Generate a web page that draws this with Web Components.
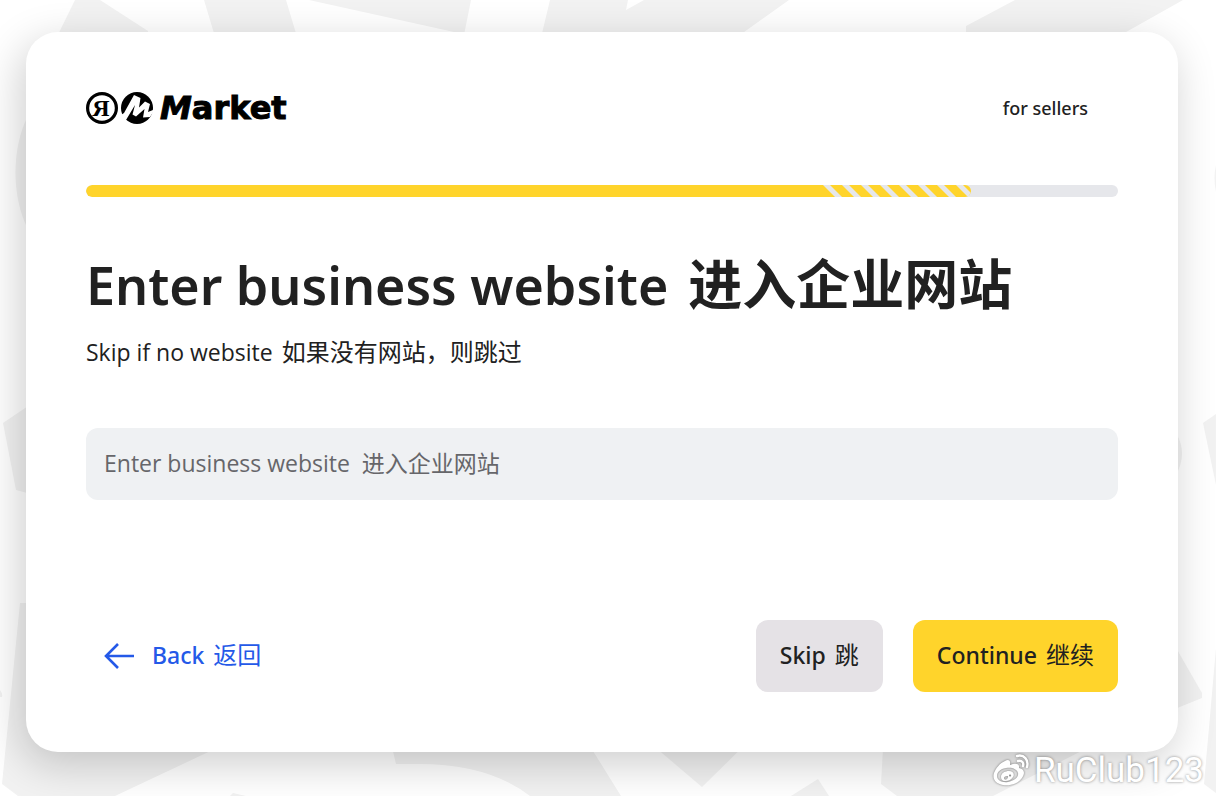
<!DOCTYPE html>
<html lang="en">
<head>
<meta charset="utf-8">
<meta name="viewport" content="width=device-width, initial-scale=1">
<title>Market for sellers</title>
<style>
  body { margin: 0; background: #fff; color: #212121; font-family: "Open Sans", "Noto Sans CJK SC", sans-serif; }
</style>
</head>
<body>
<seller-page>
  <seller-card>
    <market-logo slot="logo">Market</market-logo>
    <span slot="audience">for sellers</span>
    <step-progress slot="progress" value="85.8"></step-progress>
    <bilingual-text slot="title" role="heading" aria-level="1" size="title">Enter business website<span slot="zh" lang="zh">进入企业网站</span></bilingual-text>
    <bilingual-text slot="hint">Skip if no website<span slot="zh" lang="zh">如果没有网站，则跳过</span></bilingual-text>
    <website-field slot="field"></website-field>
    <back-link slot="back"><bilingual-text size="action">Back<span slot="zh" lang="zh">返回</span></bilingual-text></back-link>
    <action-button slot="actions"><bilingual-text size="action">Skip<span slot="zh" lang="zh">跳</span></bilingual-text></action-button>
    <action-button slot="actions" kind="primary"><bilingual-text size="action">Continue<span slot="zh" lang="zh">继续</span></bilingual-text></action-button>
  </seller-card>
  <author-mark slot="mark">RuClub123</author-mark>
</seller-page>

<script>
const define = (name, html, setup) => {
  const template = document.createElement('template');
  template.innerHTML = html;
  customElements.define(name, class extends HTMLElement {
    constructor() {
      super();
      this.attachShadow({ mode: 'open' }).append(template.content.cloneNode(true));
    }
    connectedCallback() { if (setup) setup(this, this.shadowRoot); }
  });
};

define('seller-page', `
<style>
  :host { display: block; position: relative; min-height: 100vh; box-sizing: border-box; padding: 32px 38px 44px 26px; overflow: hidden; isolation: isolate; }
  .shapes { position: absolute; inset: 0; width: 100%; height: 100%; z-index: -1; fill: #f2f2f2; }
</style>
<svg class="shapes" viewBox="0 0 1216 796" preserveAspectRatio="none" aria-hidden="true">
  <path d="M75 0h25l48 31v20H50z"/>
  <path d="M204 0h82l18 60h-82z"/>
  <path d="M309 0h162l-10 50-7-18z"/>
  <path d="M550 0h78l-2 10 18-10h145l-70 50H538z"/>
  <path d="M1015 0h168l-80 45H966V26z"/>
  <path d="M50 90C4 120 4 225 50 255z"/>
  <path d="M40 398 3 423l13 67 30 8z"/>
  <path d="M20 603h30v120h220l-155 73H18L2 784z"/>
  <path d="M0 690q3 4 2 7H0z"/>
  <path d="M386 722l10 42h24q68 0 110 32h91l-46-74z"/>
  <path d="M230 796l3-3 13 3z"/>
  <path d="M635 730h125l-58 57z"/>
  <path d="M791 796l27-17 11 17z"/>
  <path d="M884 730l-3 54 16 12h96l130-66z"/>
  <path d="M1160 415q44 37 0 80z"/>
  <path d="M1160 620l42 73v5l-42 17z"/>
  <path d="M1216 414l-13 9 13 62z"/>
  <path d="M1216 648l-12 136 12 9z"/>
  <path d="M1216 165q-3 13 0 27z"/>
</svg>
<slot></slot>
<slot name="mark"></slot>`);

define('seller-card', `
<style>
  :host { display: flex; flex-direction: column; box-sizing: border-box; min-height: calc(100vh - 76px); padding: 60px; border-radius: 32px; background: #fff; box-shadow: -5px 12px 44px rgba(0, 0, 0, .2); }
  header { display: flex; align-items: center; justify-content: space-between; height: 32px; padding-right: 30px; margin-bottom: 61px; }
  .audience { font: 500 18px/32px "Noto Sans", sans-serif; }
  main { display: flex; flex-direction: column; }
  .title { margin-top: 49px; }
  .hint { margin-top: 14px; }
  .field { margin-top: 60px; }
  footer { display: flex; align-items: center; justify-content: space-between; margin-top: auto; }
  .actions { display: flex; gap: 30px; }
</style>
<header><slot name="logo"></slot><div class="audience"><slot name="audience"></slot></div></header>
<main>
  <slot name="progress"></slot>
  <div class="title"><slot name="title"></slot></div>
  <div class="hint"><slot name="hint"></slot></div>
  <div class="field"><slot name="field"></slot></div>
</main>
<footer><slot name="back"></slot><div class="actions"><slot name="actions"></slot></div></footer>`);

define('market-logo', `
<style>
  :host { display: flex; align-items: center; height: 32px; color: #000; }
  svg { flex: none; width: 68px; height: 32px; }
  .ya { font: 700 24px "Liberation Serif", serif; }
  .name { margin-left: 6px; font: 700 32px/32px "DejaVu Sans", sans-serif; -webkit-text-stroke: 1px #000; }
  .name::first-letter { font-style: italic; }
</style>
<svg viewBox="0 0 68 32" aria-hidden="true">
  <circle cx="16" cy="16" r="14.4" fill="none" stroke="#000" stroke-width="3.2"/>
  <text class="ya" x="15" y="24" text-anchor="middle">Я</text>
  <g transform="translate(35)">
    <circle cx="16" cy="16" r="16"/>
    <path fill="#fff" d="M0 23 3 21 13 3l6.500 3-1.500 9.500L24 9.500l5 2.500-2 8 5-2v2.500L29 25l-7 .5L23.500 17 15 24.500l-3.500-2L14 13 5 28 0 30z"/>
  </g>
</svg>
<div class="name"><slot></slot></div>`);

define('step-progress', `
<style>
  :host { display: block; height: 12px; border-radius: 6px; background: #e6e7eb; overflow: hidden; }
  .fill { display: flex; justify-content: flex-end; height: 12px; width: var(--value); border-radius: 6px; background: #ffd42b; overflow: hidden; }
  svg { flex: none; width: 148px; height: 12px; }
</style>
<div class="fill"><svg viewBox="0 0 148 12" aria-hidden="true"><defs><pattern id="stripe" width="19" height="12" patternUnits="userSpaceOnUse"><path fill="#e6e7eb" d="M0 0h7l12 12h-7z"/></pattern></defs><rect width="148" height="12" fill="url(#stripe)"/></svg></div>`,
(host, root) => {
  const value = host.getAttribute('value');
  host.setAttribute('role', 'progressbar');
  host.setAttribute('aria-valuenow', value);
  host.setAttribute('aria-label', 'Registration progress');
  root.querySelector('.fill').style.setProperty('--value', value + '%');
});

define('bilingual-text', `
<style>
  :host { display: flex; align-items: baseline; flex-wrap: wrap; gap: 0 9px; font-size: 23px; line-height: 32px; }
  .zh { font-family: "Noto Sans CJK SC", sans-serif; font-size: 24px; font-weight: 400; }
  :host([size="title"]) { gap: 0 20px; font: 600 52px/72px "Noto Sans", sans-serif; }
  :host([size="title"]) .zh { font-size: 54px; font-weight: 700; }
  :host([size="action"]) { font: 500 23px/32px "Noto Sans", sans-serif; flex-wrap: nowrap; padding-bottom: 4px; }
  :host([size="action"]) .zh { font-weight: 400; }
</style>
<span><slot></slot></span><span class="zh"><slot name="zh"></slot></span>`);

define('website-field', `
<style>
  :host { display: block; }
  input { display: block; box-sizing: border-box; width: 100%; height: 72px; padding: 0 18px 2px; border: 0; border-radius: 12px; background: #eff1f3; color: #212121; font: 400 23px "Open Sans", "Noto Sans CJK SC", sans-serif; }
  input::placeholder { color: #66666a; opacity: 1; }
</style>
<input type="url" aria-label="Enter business website" placeholder="Enter business website&nbsp; 进入企业网站">`);

define('back-link', `
<style>
  :host { display: block; padding-left: 18px; }
  a { display: flex; align-items: center; gap: 18px; color: #2459e8; text-decoration: none; }
  svg { width: 30px; height: 26px; fill: none; stroke: currentColor; stroke-width: 2.600; }
</style>
<a href="#back"><svg viewBox="0 0 30 26" aria-hidden="true"><path d="M2 13h28M14 1 2 13l12 12"/></svg><slot></slot></a>`);

define('action-button', `
<style>
  :host { display: block; }
  button { display: block; height: 72px; padding: 0 24px; border: 0; border-radius: 12px; background: #e5e2e6; color: #212121; font: inherit; cursor: pointer; }
  :host([kind="primary"]) button { background: #ffd42b; }
</style>
<button type="button"><slot></slot></button>`);

define('author-mark', `
<style>
  :host { position: absolute; right: 12px; bottom: 6px; display: flex; align-items: center; gap: 4px; color: #fff; font: 400 35px/38px Roboto, sans-serif; text-shadow: 0 0 3px rgba(0, 0, 0, .45); }
  svg { width: 38px; height: 34px; filter: drop-shadow(0 0 1px rgba(0, 0, 0, .5)); }
</style>
<svg viewBox="0 0 38 34" aria-hidden="true">
  <path fill="#fff" fill-rule="evenodd" d="M13 7c3-2 6-1 5 4 5-2 10-2 9 3 6 1 6 6 3 10-4 6-12 8-19 7C4 30 0 25 2 19 4 14 8 9 13 7zM5 22c0 4 5 7 11 6s11-5 10-9-6-6-12-5-9 4-9 8zm4 1c0-4 4-6 8-6s6 3 4 6-5 4-8 4-4-2-4-4zm3 1c0 2 2 2 3 1s2-3 0-3-3 1-3 2zm6-3.500a1 1 0 1 0 .1 0z"/>
  <path fill="none" stroke="#fff" stroke-width="2.400" stroke-linecap="round" d="M25 2c7-2 12 4 10 11M26 7c4-1 6 2 5 5"/>
</svg><slot></slot>`);
</script>
</body>
</html>
